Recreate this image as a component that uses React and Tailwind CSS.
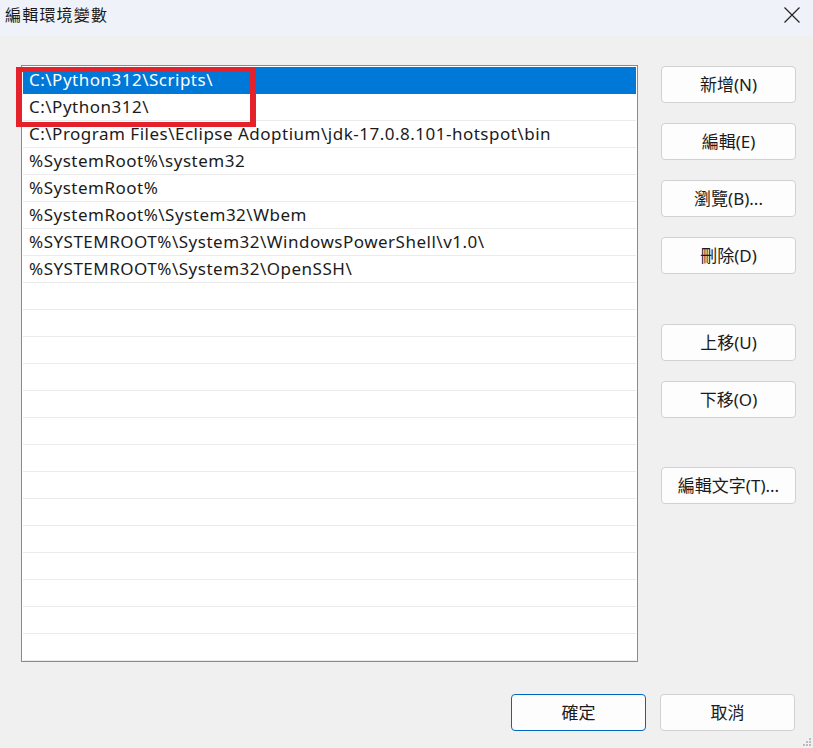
import { useState } from "react";

const paths = [
  "C:\\Python312\\Scripts\\",
  "C:\\Python312\\",
  "C:\\Program Files\\Eclipse Adoptium\\jdk-17.0.8.101-hotspot\\bin",
  "%SystemRoot%\\system32",
  "%SystemRoot%",
  "%SystemRoot%\\System32\\Wbem",
  "%SYSTEMROOT%\\System32\\WindowsPowerShell\\v1.0\\",
  "%SYSTEMROOT%\\System32\\OpenSSH\\",
];

const font = { fontFamily: '"Noto Sans", "Noto Sans CJK TC", sans-serif' };

function Btn({ children, primary, className = "" }) {
  return (
    <button
      className={`h-[37px] w-[135px] rounded-[4px] bg-[#fdfdfd] text-[17px] text-[#1b1b1b] ${
        primary ? "border border-[#0067c0]" : "border border-[#d1d1d1]"
      } ${className}`}
    >
      {children}
    </button>
  );
}

export default function App() {
  const [selected, setSelected] = useState(0);
  const rows = Array.from({ length: 22 }, (_, i) => paths[i] || "");

  return (
    <div className="w-[813px] h-[748px] bg-[#f0f0f0] flex flex-col overflow-hidden relative" style={font}>
      {/* title bar */}
      <div className="h-[36px] bg-[#eff3f9] flex items-center justify-between pl-[5px] pr-[12px]">
        <span className="text-[16px] text-[#1a1a1a] tracking-[1.2px] mt-[-7px]">
          編輯環境變數
        </span>
        <svg width="18" height="18" viewBox="0 0 18 18" className="mt-[-6px]">
          <path d="M1.5 1.5 L16.5 16.5 M16.5 1.5 L1.5 16.5" stroke="#222" strokeWidth="1.2" />
        </svg>
      </div>

      <div className="flex pt-[29px] pl-[21px]">
        {/* list */}
        <div className="relative w-[617px] h-[597px] border border-[#8a8a8a] bg-white pt-px px-px overflow-hidden">
          {rows.map((p, i) => (
            <div
              key={i}
              onClick={() => p && setSelected(i)}
              className={`h-[27px] flex items-center pl-[6px] text-[17px] tracking-[0.5px] whitespace-nowrap border-b ${
                selected === i
                  ? "bg-[#0078d7] text-white border-[#0078d7]"
                  : "text-[#1b1b1b] border-[#ebebeb]"
              }`}
            >
              {p}
            </div>
          ))}
        </div>

        {/* side buttons */}
        <div className="flex flex-col pl-[23px] pt-px">
          <Btn>新增(N)</Btn>
          <Btn className="mt-[20px]">編輯(E)</Btn>
          <Btn className="mt-[20px]">瀏覽(B)...</Btn>
          <Btn className="mt-[20px]">刪除(D)</Btn>
          <Btn className="mt-[50px]">上移(U)</Btn>
          <Btn className="mt-[20px]">下移(O)</Btn>
          <Btn className="mt-[49px]">編輯文字(T)...</Btn>
        </div>
      </div>

      {/* bottom buttons */}
      <div className="flex justify-end gap-[14px] pr-[18px] pt-[32px]">
        <Btn primary>確定</Btn>
        <Btn>取消</Btn>
      </div>

      {/* red annotation box */}
      <div className="absolute left-[16px] top-[67px] w-[240px] h-[60px] border-x-[6px] border-y-[5px] border-[#e3222b]" />

      {/* resize grip */}
      <div className="absolute right-[2px] bottom-[2px] grid grid-cols-3 gap-[1px]">
        {[0, 0, 1, 0, 1, 1, 1, 1, 1].map((v, i) => (
          <div key={i} className={`w-[2px] h-[2px] ${v ? "bg-[#bcbcbc]" : ""}`} />
        ))}
      </div>
    </div>
  );
}
